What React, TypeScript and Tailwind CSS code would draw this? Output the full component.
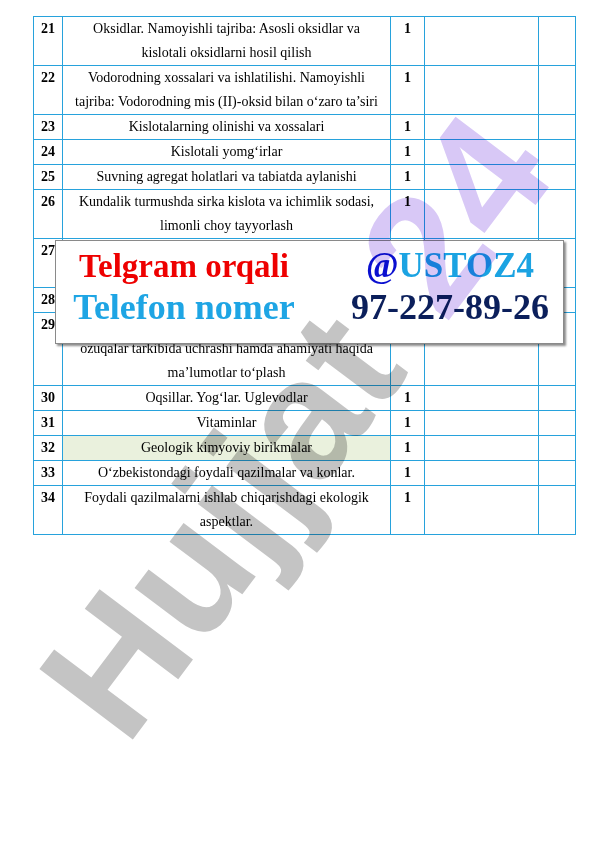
const rows: { n: number; lines: string[]; hl?: boolean }[] = [
  { n: 21, lines: ["Oksidlar. Namoyishli tajriba: Asosli oksidlar va", "kislotali oksidlarni hosil qilish"] },
  {
    n: 22,
    lines: ["Vodorodning xossalari va ishlatilishi. Namoyishli", "tajriba: Vodorodning mis (II)-oksid bilan o‘zaro ta’siri"],
  },
  { n: 23, lines: ["Kislotalarning olinishi va xossalari"] },
  { n: 24, lines: ["Kislotali yomg‘irlar"] },
  { n: 25, lines: ["Suvning agregat holatlari va tabiatda aylanishi"] },
  { n: 26, lines: ["Kundalik turmushda sirka kislota va ichimlik sodasi,", "limonli choy tayyorlash"] },
  { n: 27, lines: ["Amaliy mashg‘ulot: Mineral o‘g‘itlar va ularning", "qishloq xo‘jaligidagi ahamiyati"] },
  { n: 28, lines: ["Organik moddalar haqida tushuncha"] },
  {
    n: 29,
    lines: [
      "Oqsillar, yog‘lar, uglevodlar va vitaminlarning",
      "ozuqalar tarkibida uchrashi hamda ahamiyati haqida",
      "ma’lumotlar to‘plash",
    ],
  },
  { n: 30, lines: ["Oqsillar. Yog‘lar. Uglevodlar"] },
  { n: 31, lines: ["Vitaminlar"] },
  { n: 32, lines: ["Geologik kimyoviy birikmalar"], hl: true },
  { n: 33, lines: ["O‘zbekistondagi foydali qazilmalar va konlar."] },
  { n: 34, lines: ["Foydali qazilmalarni ishlab chiqarishdagi ekologik", "aspektlar."] },
];

export default function App() {
  return (
    <div className="relative w-[596px] h-[842px] bg-white overflow-hidden">
      <div className="pt-[16px] pl-[33px]">
        <table className="table-fixed border-collapse w-[542px] font-['Liberation_Serif',serif] text-[14px] leading-[24px] text-black">
          <colgroup>
            <col className="w-[29px]" />
            <col className="w-[328px]" />
            <col className="w-[34px]" />
            <col className="w-[114px]" />
            <col className="w-[37px]" />
          </colgroup>
          <tbody>
            {rows.map((r) => (
              <tr key={r.n}>
                <td className="border border-[#27a2dc] align-top pl-[7px] font-bold">{r.n}</td>
                <td className={`border border-[#27a2dc] align-top text-center ${r.hl ? "bg-[#eaf1dd]" : ""}`}>
                  {r.lines.map((l) => (
                    <div key={l} className="whitespace-nowrap">
                      {l}
                    </div>
                  ))}
                </td>
                <td className="border border-[#27a2dc] align-top text-center font-bold">1</td>
                <td className="border border-[#27a2dc]"></td>
                <td className="border border-[#27a2dc]"></td>
              </tr>
            ))}
          </tbody>
        </table>
      </div>

      {/* contact banner */}
      <div className="absolute left-[55px] top-[240px] w-[509px] h-[104px] bg-white border border-[#8a8a8a] shadow-[2px_2px_2px_rgba(0,0,0,0.45)] pt-[4px] font-['Liberation_Serif',serif] font-bold">
        <div className="flex h-[41px] items-start text-[33px] leading-[42px]">
          <div className="w-[256px] text-center text-[#ee0000]">Telgram orqali</div>
          <div className="flex-1 pl-[25px] text-center text-[35px]">
            <span className="text-[#0a0fd0]">@</span>
            <span className="text-[#1ba3e2]">USTOZ4</span>
          </div>
        </div>
        <div className="flex h-[42px] items-start text-[36px] leading-[42px]">
          <div className="w-[256px] text-center text-[#1ea5e4]">Telefon nomer</div>
          <div className="flex-1 pl-[25px] text-center text-[#0b1f5b]">97-227-89-26</div>
        </div>
      </div>

      {/* watermark, rotated round the left end of the word */}
      <div className="absolute left-[79px] top-[628px] origin-left -rotate-[53deg] mix-blend-multiply pointer-events-none whitespace-nowrap font-['Liberation_Sans',sans-serif] font-bold text-[170px] leading-none">
        <span className="text-[#c4c4c4]">Hujjat</span>
        <span className="ml-[58px] text-[#d8c8f6]">24</span>
      </div>
    </div>
  );
}
